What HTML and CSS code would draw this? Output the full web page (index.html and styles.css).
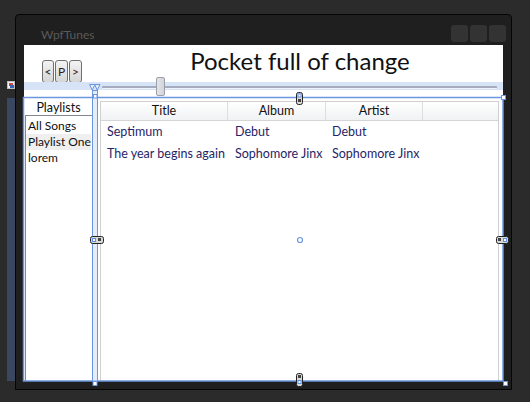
FILE: index.html
```html
<!DOCTYPE html>
<html>
<head>
<meta charset="utf-8">
<link rel="stylesheet" href="styles.css">
</head>
<body>
<div class="canvas">
  <div class="side-icon"><span class="si-red"></span><span class="si-blue"></span></div>
  <div class="side-strip"></div>
  <div class="window">
    <div class="titlebar">
      <span class="wtitle">WpfTunes</span>
      <div class="caps"><span></span><span></span><span></span></div>
    </div>
    <div class="client">
      <div class="nav">
        <button class="navbtn b1">&lt;</button><button class="navbtn b2">P</button><button class="navbtn b3">&gt;</button>
      </div>
      <h1 class="song">Pocket full of change</h1>
      <div class="seekrow">
        <div class="slider"><div class="track"></div><div class="thumb"></div></div>
      </div>
      <div class="playlists">
        <div class="pl-head">Playlists</div>
        <ul class="pl-list">
          <li>All Songs</li>
          <li class="sel">Playlist One</li>
          <li>lorem</li>
        </ul>
      </div>
      <div class="songs">
        <div class="lv-head">
          <span class="col c1">Title</span><span class="col c2">Album</span><span class="col c3">Artist</span><span class="col c4"></span>
        </div>
        <div class="lv-row"><span class="cell c1">Septimum</span><span class="cell c2">Debut</span><span class="cell c3">Debut</span></div>
        <div class="lv-row"><span class="cell c1">The year begins again</span><span class="cell c2">Sophomore Jinx</span><span class="cell c3">Sophomore Jinx</span></div>
      </div>
    </div>
  </div>
  <svg class="adorners" width="530" height="402" viewBox="0 0 530 402">
    <rect x="23.5" y="97.5" width="479.5" height="283.5" fill="none" stroke="#6b96e0" stroke-width="1.5"/>
    <rect x="92.5" y="90.5" width="5" height="290.5" fill="#e6edfa" stroke="#6b96e0" stroke-width="1"/>
    <path d="M89.5 84.5 L95 84.5 L92.25 90 Z M94.5 84.5 L100 84.5 L97.25 90 Z" fill="#e6edfa" stroke="#6b96e0" stroke-width="1"/>
    <rect x="93.5" y="94.5" width="3.5" height="3.5" fill="#fff" stroke="#6b96e0" stroke-width="1"/>
    <rect x="501.5" y="95.5" width="4" height="4" fill="#fff" stroke="#6b96e0" stroke-width="1"/>
    <rect x="93" y="381.5" width="4" height="4" fill="#fff" stroke="#6b96e0" stroke-width="1"/>
    <rect x="503.5" y="381.5" width="4" height="4" fill="#fff" stroke="#6b96e0" stroke-width="1"/>
    <rect x="296.5" y="92.5" width="6" height="12" rx="2" fill="#d9d9d9" stroke="#222" stroke-width="1"/>
    <rect x="298" y="94" width="3" height="3" fill="#fff" stroke="#5b8ee6" stroke-width="1"/>
    <rect x="298" y="99" width="3" height="3" fill="#444"/>
    <rect x="90.5" y="236.5" width="13" height="7" rx="2" fill="#d9d9d9" stroke="#222" stroke-width="1"/>
    <rect x="92.5" y="238.5" width="3" height="3" fill="#fff" stroke="#5b8ee6" stroke-width="1"/>
    <rect x="98" y="238" width="3" height="3" fill="#444"/>
    <rect x="496.5" y="236.5" width="12" height="7" rx="2" fill="#d9d9d9" stroke="#222" stroke-width="1"/>
    <rect x="498" y="238" width="3" height="3" fill="#444"/>
    <rect x="503.5" y="238.5" width="3" height="3" fill="#fff" stroke="#5b8ee6" stroke-width="1"/>
    <rect x="296.5" y="373.5" width="6" height="13" rx="2" fill="#d9d9d9" stroke="#222" stroke-width="1"/>
    <rect x="298" y="375" width="3" height="3" fill="#444"/>
    <rect x="298" y="380.5" width="3" height="3" fill="#fff" stroke="#5b8ee6" stroke-width="1"/>
    <circle cx="300" cy="240" r="2.5" fill="#fff" stroke="#6b96e0" stroke-width="1.2"/>
  </svg>
</div>
</body>
</html>
```

FILE: styles.css
```css
html, body {
  margin: 0;
  padding: 0;
}
body {
  background: #2b2b2b;
  font-family: "Lato", "Open Sans", sans-serif;
}
.canvas {
  position: relative;
  width: 530px;
  height: 402px;
  overflow: hidden;
  background: #2b2b2b;
}
.side-strip {
  position: absolute;
  left: 7px;
  top: 98px;
  width: 8px;
  height: 283px;
  background: #394860;
}
.side-icon {
  position: absolute;
  left: 7px;
  top: 81px;
  width: 8px;
  height: 8px;
  background: #f2f2f2;
  border: 1px solid #bbb;
  box-sizing: border-box;
}
.si-red {
  position: absolute;
  left: 1px;
  top: 1px;
  width: 4px;
  height: 3px;
  background: #c44;
}
.si-blue {
  position: absolute;
  right: 0;
  bottom: 0;
  width: 4px;
  height: 3px;
  background: #3b62b5;
}
.window {
  position: absolute;
  left: 15px;
  top: 14px;
  width: 497px;
  height: 376px;
  box-sizing: border-box;
  border: 1px solid #050505;
  border-radius: 4px 4px 0 0;
  background: #1f1f1f;
  display: flex;
  flex-direction: column;
}
.titlebar {
  height: 30px;
  display: flex;
  justify-content: space-between;
  align-items: flex-start;
  padding-left: 25px;
  padding-right: 5px;
}
.wtitle {
  margin-top: 12px;
  line-height: 16px;
  font-size: 12px;
  color: #5a5a5a;
}
.caps {
  margin-top: 10px;
  display: flex;
  gap: 2px;
}
.caps span {
  width: 17px;
  height: 17px;
  border-radius: 3px;
  background: #333333;
}
.client {
  margin: 0 8px;
  height: 336px;
  background: #fff;
  display: grid;
  grid-template-columns: 69px 4px 1fr;
  grid-template-rows: 37px 16px 1fr;
}
.nav {
  grid-column: 1 / 3;
  grid-row: 1;
  display: flex;
  align-items: flex-start;
  gap: 1px;
  padding-left: 18px;
  padding-top: 15px;
}
.navbtn {
  height: 23px;
  padding: 0;
  margin: 0;
  border: 1px solid #707070;
  border-radius: 3px;
  background: linear-gradient(#f4f4f4, #e4e4e4 50%, #d6d6d6);
  font-family: "Lato", "Open Sans", sans-serif;
  font-size: 12px;
  color: #222;
  line-height: 19px;
}
.b1 { width: 12px; }
.b2 { width: 13px; color: #3a1a10; }
.b3 { width: 13px; color: #4a2010; }
.song {
  grid-column: 3;
  grid-row: 1;
  margin: 0;
  text-align: center;
  font-weight: normal;
  font-size: 24px;
  line-height: 32px;
  color: #111;
}
.seekrow {
  grid-column: 1 / -1;
  grid-row: 2;
  background: linear-gradient(#d7e3f7 0, #d7e3f7 8px, #ffffff 8px);
  display: grid;
  grid-template-columns: 73px 1fr;
}
.slider {
  grid-column: 2;
  position: relative;
  padding: 4px 6px 0 5px;
}
.track {
  height: 2px;
  border-radius: 1px;
  background: #a4acbd;
  border-bottom: 1px solid #eef2fa;
}
.thumb {
  position: absolute;
  left: 59px;
  top: -5px;
  width: 9px;
  height: 19px;
  box-sizing: border-box;
  border: 1px solid #9aa0a8;
  border-radius: 2px;
  background: linear-gradient(90deg, #e4e4e4, #d0d4dc);
}
.playlists {
  grid-column: 1;
  grid-row: 3;
  display: flex;
  flex-direction: column;
  min-height: 0;
  min-width: 0;
}
.pl-head {
  box-sizing: border-box;
  height: 17px;
  padding-top: 2px;
  line-height: 15px;
  text-align: center;
  font-size: 12.5px;
  color: #111;
}
.pl-list {
  flex: 1;
  margin: 0 0 0 1px;
  padding: 2px 0 0 0;
  list-style: none;
  border: 1px solid #828790;
  border-bottom: none;
  overflow: hidden;
}
.pl-list li {
  height: 16px;
  line-height: 16px;
  padding-left: 2px;
  font-size: 12px;
  color: #111;
  margin-right: 1px;
  white-space: nowrap;
}
.pl-list li.sel {
  background: #efefef;
}
.songs {
  grid-column: 3;
  grid-row: 3;
  margin: 3px 4px 0 3px;
  border: 1px solid #d0d0d0;
  border-bottom: none;
}
.lv-head {
  display: flex;
  height: 18px;
  border-bottom: 1px solid #d5d5d5;
  background: linear-gradient(#ffffff, #f7f8f9 50%, #f1f2f3);
}
.col {
  box-sizing: border-box;
  border-right: 1px solid #dedede;
  text-align: center;
  font-size: 12.5px;
  line-height: 18px;
  color: #111;
}
.c1 { width: 127px; }
.c2 { width: 98px; }
.c3 { width: 97px; }
.col.c4 { flex: 1; border-right: none; }
.lv-row {
  display: flex;
  height: 22px;
  line-height: 22px;
}
.cell {
  box-sizing: border-box;
  padding-left: 6px;
  font-size: 12.5px;
  color: #1f2568;
  white-space: nowrap;
}
.cell.c2 { padding-left: 7px; }
.adorners {
  position: absolute;
  left: 0;
  top: 0;
  pointer-events: none;
}
```
